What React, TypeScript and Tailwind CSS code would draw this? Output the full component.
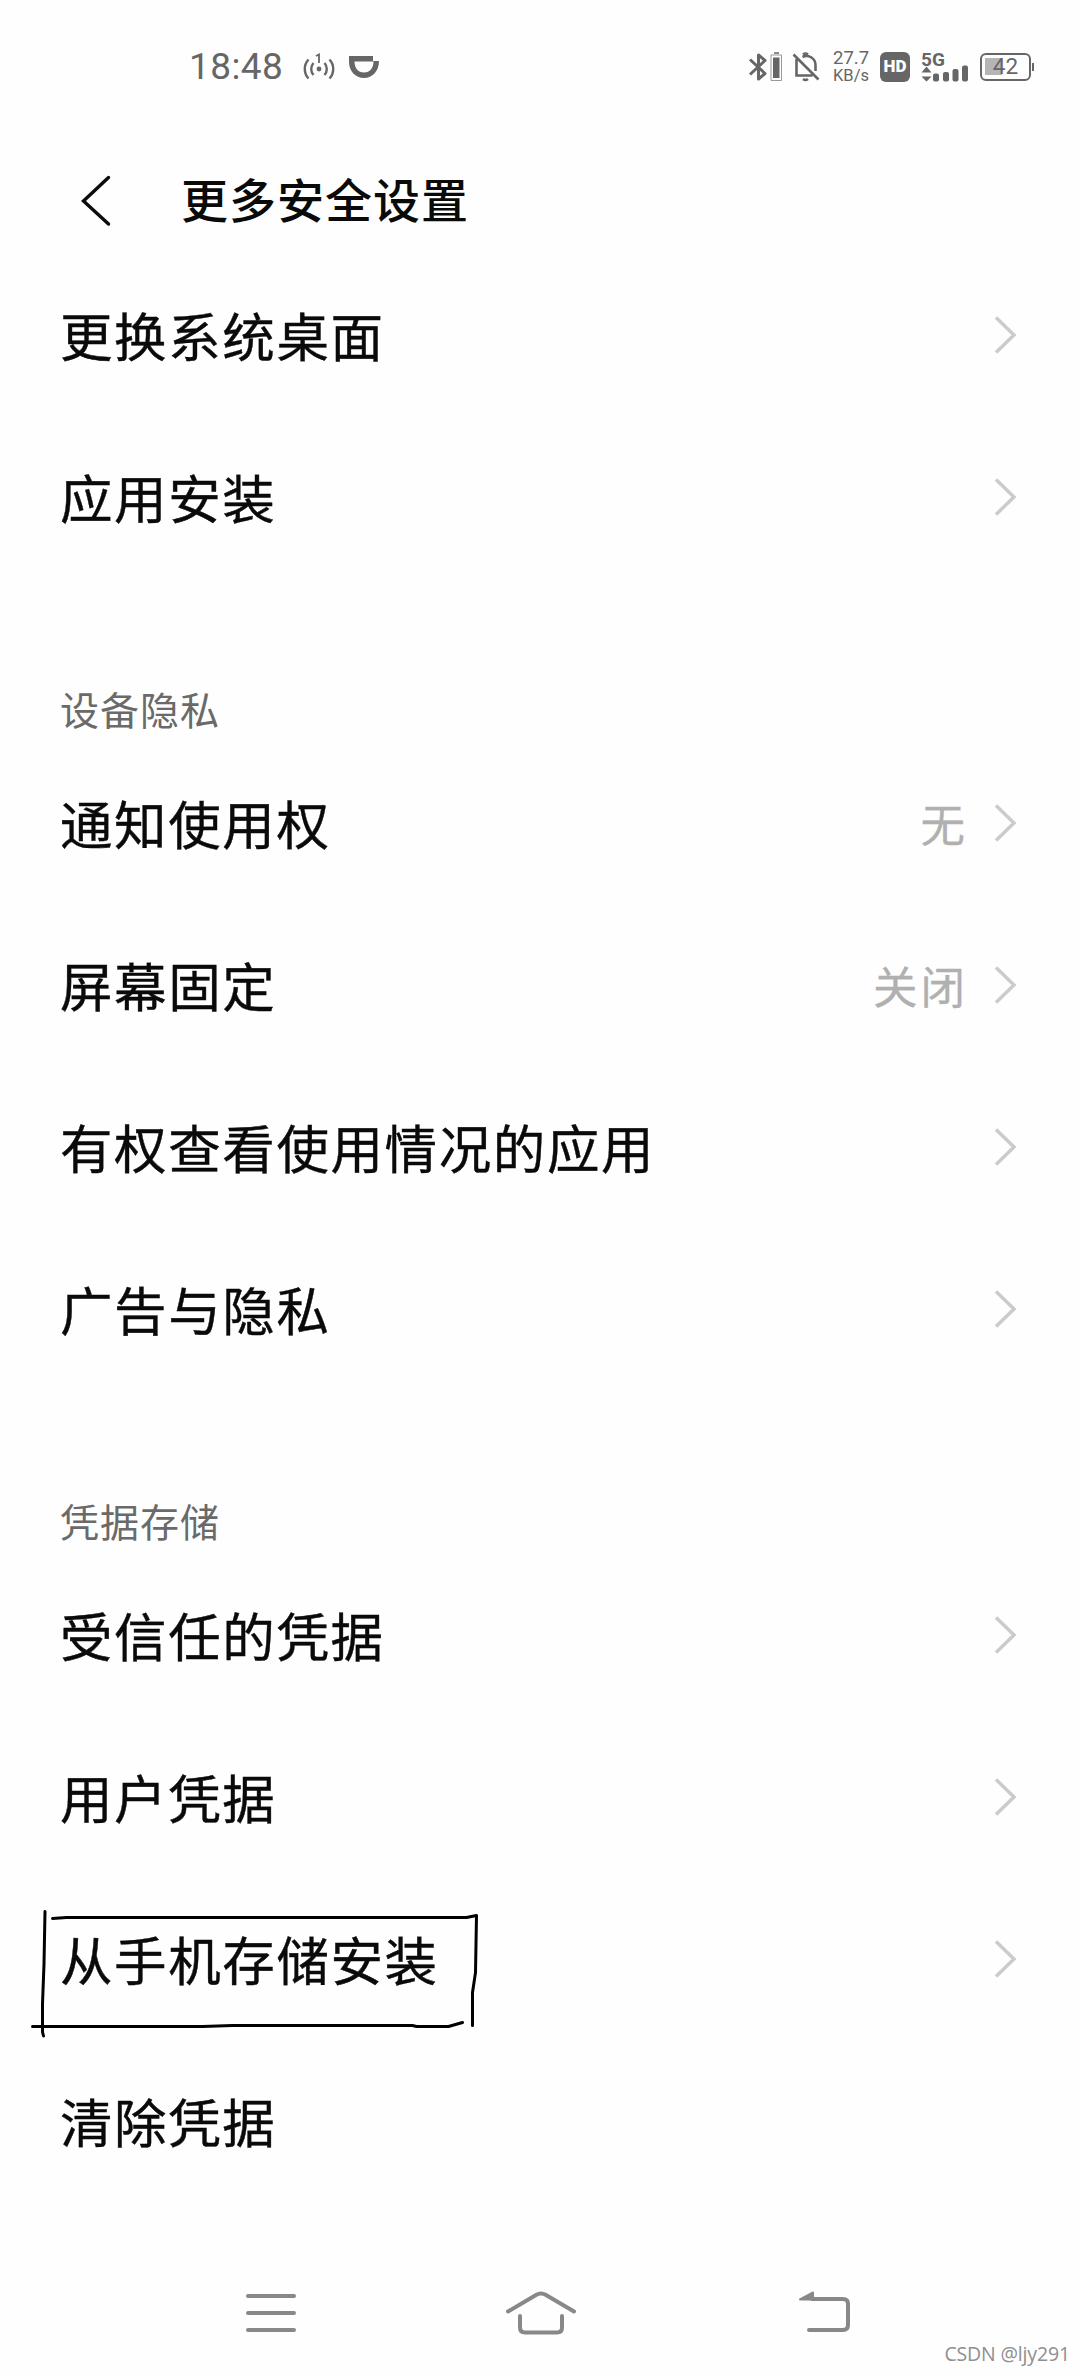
type SettingItem = {
  label: string;
  value?: string;
  arrow?: boolean;
  marked?: boolean;
};

type SettingGroup = {
  title?: string;
  items: SettingItem[];
};

const groups: SettingGroup[] = [
  {
    items: [
      { label: "更换系统桌面", arrow: true },
      { label: "应用安装", arrow: true }
    ]
  },
  {
    title: "设备隐私",
    items: [
      { label: "通知使用权", value: "无", arrow: true },
      { label: "屏幕固定", value: "关闭", arrow: true },
      { label: "有权查看使用情况的应用", arrow: true },
      { label: "广告与隐私", arrow: true }
    ]
  },
  {
    title: "凭据存储",
    items: [
      { label: "受信任的凭据", arrow: true },
      { label: "用户凭据", arrow: true },
      { label: "从手机存储安装", arrow: true, marked: true },
      { label: "清除凭据" }
    ]
  }
];

const StatusBar = () => (
  <header className="flex h-[134px] items-start justify-between pt-10 pr-[46px] pl-[189px] text-[#666]">
    <div className="flex h-[53px] items-center">
      <span className="w-[96px] font-['Roboto',sans-serif] text-[37px] leading-none tracking-[0.4px] whitespace-nowrap">18:48</span>
      <svg className="ml-[18px]" width="32" height="30" viewBox="0 0 32 30" fill="none" stroke="currentColor" strokeWidth="2.4">
        <path d="M5.500 7.500a14 14 0 0 0 0 19M26.500 7.500a14 14 0 0 1 0 19M10.500 11a9 9 0 0 0 0 12M21.500 11a9 9 0 0 1 0 12" />
        <path d="M13 4l3-1.500V11" strokeWidth="1.8" />
        <circle cx="16" cy="17" r="2.4" fill="currentColor" stroke="none" />
      </svg>
      <svg className="ml-[13px]" width="32" height="24" viewBox="0 0 32 24">
        <path
          fillRule="evenodd"
          fill="currentColor"
          d="M1 1h24v5h6C31 16 24.500 23 16 23S1 16 1 7zM6.500 6.500C6.500 13 10 17.500 16 17.500S25.500 13 25.500 6.500z"
        />
      </svg>
    </div>
    <div className="flex h-[53px] items-center">
      <svg width="36" height="30" viewBox="0 0 36 30" fill="none" stroke="currentColor">
        <path d="M2 7.500l15 14L10.500 27V3l6.500 5.500L2 22.500" strokeWidth="3" strokeLinejoin="round" />
        <path d="M23 3h10.500v25.500H23z" strokeWidth="1" stroke="#999" />
        <path d="M26 1h5" strokeWidth="1.500" />
        <path d="M25 5.500h6.500V26H25z" fill="currentColor" stroke="none" />
      </svg>
      <svg className="ml-[8px]" width="28" height="30" viewBox="0 0 28 30" fill="none" stroke="currentColor" strokeWidth="2.6">
        <path d="M1.500 2.500L26.500 27.500M4.500 7v16.500h16M10.500 5C16 2 23.500 6 23.500 13v6" />
        <path d="M11 2.500q2.500-2 5 0M11 27q2.500 2 5 0" strokeWidth="2.500" />
      </svg>
      <div className="ml-[13px] w-[36px] font-['Roboto',sans-serif] whitespace-nowrap">
        <div className="text-[18.500px] leading-[17px]">27.7</div>
        <div className="text-[16.500px] leading-[17px]">KB/s</div>
      </div>
      <div className="ml-[11px] flex h-[30px] w-[30px] items-center justify-center rounded-md bg-[#666] font-['Roboto',sans-serif] text-[17px] leading-none font-black text-white">
        HD
      </div>
      <div className="relative ml-[11px] h-[30px] w-[48px]">
        <span className="absolute -top-px left-0 font-['Roboto',sans-serif] text-[19px] leading-[17px] font-bold">5G</span>
        <svg width="48" height="30" viewBox="0 0 48 30" fill="currentColor">
          <path d="M5.500 14.500l5 6h-10zM5.500 29.500l-5-5h10z" />
          <rect x="12" y="21.500" width="6" height="8" rx="2" />
          <rect x="22" y="20" width="6" height="9.500" rx="2" />
          <rect x="31.500" y="17" width="6" height="12.500" rx="2" />
          <rect x="41" y="13.500" width="6" height="16" rx="2" />
        </svg>
      </div>
      <div className="ml-[11px] flex items-center">
        <div className="relative flex h-[28px] w-[51px] items-center justify-center rounded-[6px] border-[2.500px] border-[#666] font-['Roboto',sans-serif] text-[22.500px] leading-none">
          <span className="absolute top-[3px] left-[3px] h-[17px] w-[17px] bg-[#b5b5b5]" />
          <span className="relative">42</span>
        </div>
        <span className="ml-px h-[8px] w-[2px] bg-[#666]" />
      </div>
    </div>
  </header>
);

const TitleBar = () => (
  <div className="flex h-[120px] items-center pb-[1px] pl-[80px]">
    <svg className="mt-[15px]" width="32" height="52" viewBox="0 0 32 52" fill="none" stroke="#0c0c0c" strokeWidth="3.400">
      <path d="M28.500 2.500L3.500 26l25 23" strokeLinecap="round" />
    </svg>
    <h1 className="mt-[8px] ml-[69px] text-[47px] leading-none font-medium tracking-[1px]">更多安全设置</h1>
  </div>
);

const Chevron = () => (
  <svg className="shrink-0" width="26" height="40" viewBox="0 0 26 40" fill="none" stroke="#cbcbcb" strokeWidth="3.500">
    <path d="M2 2.500l18 17.500L2 37.500" />
  </svg>
);

// hand drawn frame around a row label
const Marker = () => (
  <svg
    className="pointer-events-none absolute top-[26px] left-[20px]"
    width="464"
    height="134"
    viewBox="-8 0 464 134"
    fill="none"
    stroke="#000"
    strokeWidth="3"
    strokeLinecap="round"
    strokeLinejoin="round"
  >
    <path d="M17 7.500L16 60l-1.500 40v28l1 4" />
    <path d="M24.500 14.500l14-1h400l10-2-1 57-3 20v33" />
    <path d="M4.500 122.500h170l30-1h180l4 1h32l14-4" />
  </svg>
);

const Row = ({ item }: { item: SettingItem }) => (
  <li className="relative flex h-[162px] items-center pr-[60px] pl-[60px]">
    <span className="flex-1 pb-px text-[52.500px] leading-none tracking-[1.600px] [-webkit-text-stroke:0.4px]">{item.label}</span>
    {item.value && (
      <span className="mr-[26px] text-[44.500px] leading-none tracking-[3px] text-[#b0b0b0] [-webkit-text-stroke:0.3px]">
        {item.value}
      </span>
    )}
    {item.arrow && <Chevron />}
    {item.marked && <Marker />}
  </li>
);

const NavBar = () => (
  <nav className="flex h-[110px] items-center pl-[244px] text-[#888]">
    <svg width="54" height="44" viewBox="0 0 54 44" fill="none" stroke="currentColor" strokeWidth="4" strokeLinecap="round">
      <path d="M4 5h46M4 22h46M4 39h46" />
    </svg>
    <svg className="ml-[207px]" width="72" height="48" viewBox="0 0 72 48" fill="none" stroke="currentColor" strokeWidth="4" strokeLinecap="round">
      <path d="M3 22.500L31 6q5-3 10 0L69 22.500M15 27v11.500q0 5 5 5h32q5 0 5-5V27" />
    </svg>
    <svg className="ml-[221px]" width="54" height="44" viewBox="0 0 54 44" fill="none" stroke="currentColor" strokeWidth="4" strokeLinecap="round">
      <path d="M14 8h31q5 0 5 5v21q0 5-5 5H11" />
      <path d="M2 8.500L15 1.500v7z" strokeWidth="2" strokeLinejoin="round" fill="currentColor" />
    </svg>
  </nav>
);

const App = () => {
  return (
    <div className="flex h-[2376px] w-[1080px] flex-col overflow-hidden bg-[#fefefe] font-['Noto_Sans_CJK_SC',sans-serif] text-[#0a0a0a]">
      <StatusBar />
      <TitleBar />
      <main>
        {groups.map((group, index) => (
          <section key={index}>
            {group.title && (
              <h2 className="flex h-[164px] items-end pb-[14px] pl-[60px] text-[39px] leading-none tracking-[1px] text-[#6a6a6a]">
                {group.title}
              </h2>
            )}
            <ul>
              {group.items.map((item) => (
                <Row key={item.label} item={item} />
              ))}
            </ul>
          </section>
        ))}
      </main>
      <div className="mt-[56px]">
        <NavBar />
      </div>
      <footer className="-mt-[28px] mr-[10px] self-end font-['Open_Sans',sans-serif] text-[19.500px] leading-7 tracking-[-0.15px] text-[#8f8f8f]">
        CSDN @ljy291
      </footer>
    </div>
  );
};

export default App;
